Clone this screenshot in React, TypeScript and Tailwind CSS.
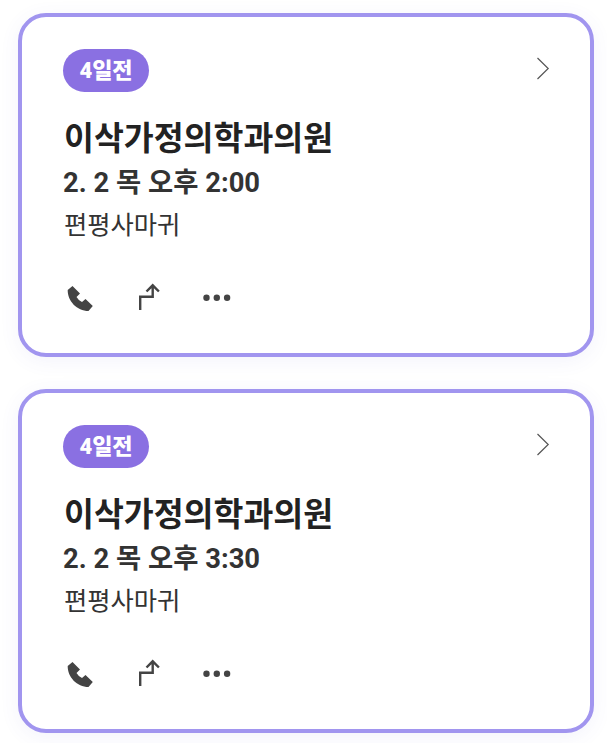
import React from "react";

const font = "font-['Roboto','Noto_Sans_CJK_KR',sans-serif]";

function Card({ time }: { time: string }) {
  return (
    <article className="h-[344px] w-[576px] rounded-[28px] border-[4px] border-[#a195ef] bg-white pl-[41px] pr-[40px] pt-[32px] shadow-[0_4px_20px_rgba(90,80,200,0.07)]">
      <header className="flex items-start justify-between">
        <span className="flex h-[43px] w-[86px] items-center justify-center rounded-full bg-[#8a70e2] text-[22px] font-black leading-none text-white">4일전</span>
        <svg className="mt-2 h-[24px] w-[14px]" viewBox="0 0 14 24" fill="none" stroke="#555" strokeWidth="1.2"><path d="M1.500 1 12.200 11.500 1.500 22" /></svg>
      </header>
      <h2 className="ml-px mt-[23px] h-[47px] whitespace-nowrap text-[32.500px] font-bold leading-[48px] text-[#222]">이삭가정의학과의원</h2>
      <p className="h-[42px] whitespace-nowrap text-[27.400px] font-bold leading-[43px] text-[#333]">2. 2 목 오후 {time}</p>
      <p className="ml-px h-[43px] whitespace-nowrap text-[25.300px] leading-[43px] text-[#333]">편평사마귀</p>
      <div className="mt-[34px] flex h-[32px] items-start text-[#444]">
        <svg className="ml-[4px] h-[32px] w-[28px]" viewBox="67 281 28 32" fill="currentColor"><path d="M72.500 286 80 293.500 76.500 297Q78.500 300.500 82 302L85.500 299 92.800 306 88.500 311C77 311 67.500 301 67.700 290Z" /></svg>
        <svg className="ml-[41px] h-[32px] w-[26px]" viewBox="136 281 26 32" fill="none" stroke="currentColor" strokeWidth="2.4"><path d="M140.200 310V296.700H152.700V285.500M146.500 291.500 152.700 285.300 158.900 291.500" /></svg>
        <svg className="ml-[40px] h-[32px] w-[30px]" viewBox="202 281 30 32" fill="currentColor"><circle cx="206.500" cy="297.700" r="3.200" /><circle cx="216.800" cy="297.700" r="3.200" /><circle cx="227.100" cy="297.700" r="3.200" /></svg>
      </div>
    </article>
  );
}

export default function App() {
  return (
    <main className={`flex h-[743px] w-[607px] flex-col gap-[32px] overflow-hidden bg-white pl-[18px] pt-[13px] ${font}`}>
      <Card time="2:00" />
      <Card time="3:30" />
    </main>
  );
}
